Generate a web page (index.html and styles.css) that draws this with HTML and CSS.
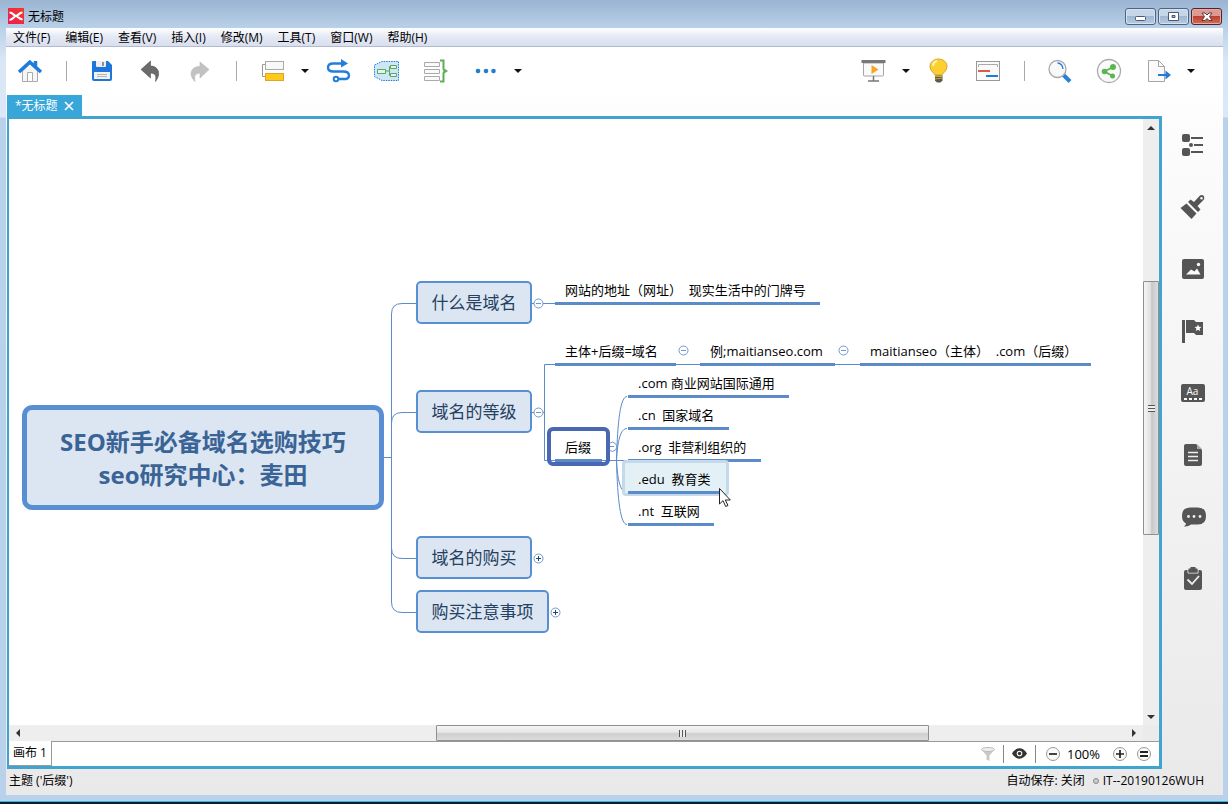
FILE: index.html
```html
<!DOCTYPE html>
<html lang="zh-CN">
<head>
<meta charset="utf-8">
<title>无标题</title>
<link rel="stylesheet" href="styles.css">
</head>
<body>
<div class="window">
  <header class="titlebar">
    <svg class="app-logo" width="16" height="16" viewBox="0 0 16 16"><defs><linearGradient id="lg" x1="0" y1="1" x2="1" y2="0"><stop offset="0" stop-color="#ee1c58"/><stop offset="1" stop-color="#f23a26"/></linearGradient></defs><rect width="16" height="16" fill="url(#lg)"/><path d="M1.500 4.500C5 4.500 6 8 8 8s3-3.500 6.500-3.500M1.500 12C5 12 6 8 8 8s3 4 6.500 3" fill="none" stroke="#fff" stroke-width="2.200"/></svg>
    <h1 class="title">无标题</h1>
    <div class="win-buttons">
      <button class="win-btn" aria-label="最小化"><svg width="14" height="12" viewBox="0 0 14 12"><rect x="1.500" y="5.500" width="10" height="4" rx="1" fill="#fff" stroke="#4a5a70"/></svg></button>
      <button class="win-btn" aria-label="最大化"><svg width="14" height="12" viewBox="0 0 14 12"><path d="M1.500 1.500h10v8h-10zM5 4.500v2h3v-2z" fill="#fff" stroke="#4a5a70" fill-rule="evenodd"/></svg></button>
      <button class="win-btn close" aria-label="关闭"><svg width="14" height="12" viewBox="0 0 14 12"><path d="M2 2h3l2 2 2-2h3L9.500 5.500l2.500 4H9l-2-2-2 2H2l2.500-4z" fill="#fff" stroke="#5a3a40"/></svg></button>
    </div>
  </header>

  <div class="client">
    <nav class="menubar">
      <button>文件(F)</button><button>编辑(E)</button><button>查看(V)</button><button>插入(I)</button><button>修改(M)</button><button>工具(T)</button><button>窗口(W)</button><button>帮助(H)</button>
    </nav>

    <div class="toolbar">
      <button class="tool" aria-label="主页"><svg viewBox="0 0 26 26"><path d="M5.500 13v10.500h15V13L13 6z" fill="#f6f6f6" stroke="#aaa"/><path d="M10.500 23.500v-9h5v9z" fill="#fff" stroke="#aaa"/><path d="M2 14 12.800 4 24 14M18.500 3v6" fill="none" stroke="#1d7ce0" stroke-width="3.500"/></svg></button>
      <span class="sep"></span>
      <button class="tool" aria-label="保存"><svg viewBox="0 0 26 26"><path d="M4 3h15l4 4v14q0 2-2 2H5q-2 0-2-2V4q0-1 1-1z" fill="#1d76dc"/><path d="M7 3h10v5q0 1-1 1H8q-1 0-1-1z" fill="#eee"/><path d="M13 4h2v4h-2z" fill="#8b9198"/><path d="M5 14h16v7H5z" fill="#f2f2f2"/><path d="M8 16.500h10M8 18.500h10" stroke="#b5b5b5"/></svg></button>
      <button class="tool" aria-label="撤销"><svg viewBox="0 0 26 26"><path d="M3 11.500 12.500 3v5c8 0 11 8 5 15.500 1-6 0-8-5-8.500v5z" fill="#6b6b6b" stroke="#555" stroke-width=".6"/></svg></button>
      <button class="tool" aria-label="重做"><svg viewBox="0 0 26 26"><path d="M22 11.500 13 4v4.500c-9 0-12 8-5 15-1-6 0-8 5-8.500v5z" fill="#c2c2c2" stroke="#b5b5b5" stroke-width=".6"/></svg></button>
      <span class="sep"></span>
      <button class="tool" aria-label="主题"><svg viewBox="0 0 26 26"><path d="M7 6.500H3.500v12H7" fill="none" stroke="#999"/><rect x="6.500" y="3.500" width="18" height="8" fill="#f8f8f8" stroke="#aaa"/><rect x="6.500" y="15.500" width="18" height="7" fill="#fdc91a" stroke="#d9a625"/></svg></button>
      <button class="caret" aria-label="更多主题"></button>
      <button class="tool" aria-label="联系"><svg viewBox="0 0 26 26"><path d="M18 5.500H8q-5 0-5 4t5 4h10q6 0 6 4t-6 3.500h-4" fill="none" stroke="#237edb" stroke-width="2.400"/><path d="M16 1l7 4.500-7 4z" fill="#237edb"/><circle cx="11" cy="21" r="2.300" fill="#fff" stroke="#237edb" stroke-width="2"/></svg></button>
      <button class="tool" aria-label="外框"><svg viewBox="0 0 26 26"><path d="M.5 7 8 3.500h16.500v19H8L.5 18.500z" fill="#cfe6f8" stroke="#1d7ce0" stroke-dasharray="1.500 1"/><path d="M11 13h4M19 8.500h-3.500v9H19" fill="none" stroke="#5aa85a"/><path d="M3.500 11.500h8v4h-8zM16.500 7.500h6v3h-6zM16.500 15.500h6v3h-6z" fill="#e8f5ee" stroke="#5aa85a"/></svg></button>
      <button class="tool" aria-label="概要"><svg viewBox="0 0 26 26"><path d="M1.500 4.500h15v4h-15zM1.500 11.500h15v4h-15zM1.500 18.500h15v4h-15z" fill="#fafafa" stroke="#aaa"/><path d="M17 2.500h3.500v8q0 2 2.500 2.500-2.500.5-2.500 2.500v8H17" fill="none" stroke="#5eae55" stroke-width="2"/><path d="M22 11v4l3-2z" fill="#5eae55"/></svg></button>
      <button class="tool" aria-label="更多"><svg viewBox="0 0 26 26"><g fill="#237bd3"><circle cx="6" cy="13" r="2.300"/><circle cx="14" cy="13" r="2.300"/><circle cx="21.500" cy="13" r="2.300"/></g></svg></button>
      <button class="caret" aria-label="更多工具"></button>
      <span class="spacer"></span>
      <button class="tool" aria-label="演示"><svg viewBox="0 0 26 26"><path d="M3.500 5v12q0 1 1 1h18q1 0 1-1V5z" fill="#fafafa" stroke="#a5a5a5"/><path d="M1.500 2h24v3h-24z" fill="#777"/><path d="M13.500 18v4.500M8 23h11" stroke="#777" stroke-width="1.500"/><path d="M11.500 7v9l7-4.500z" fill="#f5a623"/></svg></button>
      <button class="caret" aria-label="演示选项"></button>
      <button class="tool" aria-label="头脑风暴"><svg viewBox="0 0 26 26"><path d="M9 17C8 14.500 4 13 4 8.500 4 4 8 1 12.500 1S21 4 21 8.500c0 4.500-4 6-5 8.500z" fill="#fed02f" stroke="#d8a425"/><path d="M7 8q0-4 4-5" fill="none" stroke="#fff3b8" stroke-width="2"/><path d="M9 17.500h7.500v5l-2 2h-3.500l-2-2z" fill="#5b5b4b"/><path d="M9 18.500h7.500M9 21l7.500-1" stroke="#c9a83a"/></svg></button>
      <button class="tool" aria-label="甘特图"><svg viewBox="0 0 26 26"><rect x="1.500" y="3.500" width="23" height="19" fill="#fafafa" stroke="#999"/><path d="M3.500 9V6.500h19V9" fill="none" stroke="#aaa"/><path d="M3 13h12" stroke="#dc5b50" stroke-width="2"/><path d="M11 18h12" stroke="#237bd3" stroke-width="2"/></svg></button>
      <span class="sep"></span>
      <button class="tool" aria-label="搜索"><svg viewBox="0 0 26 26"><path d="m16.500 17 6.500 6.500" stroke="#2a7fdc" stroke-width="4"/><circle cx="10.500" cy="11" r="8.500" fill="#f8f9fb" stroke="#aaa" stroke-width="1.300"/><path d="M10.500 5q5 .5 5.500 6" fill="none" stroke="#2a7fdc" stroke-width="1.400"/></svg></button>
      <button class="tool" aria-label="分享"><svg viewBox="0 0 26 26"><circle cx="13" cy="13" r="11.500" fill="#fafafa" stroke="#aaa" stroke-width="1.300"/><path d="m17 9-8.500 4.500 8 4.500" fill="none" stroke="#5cb552" stroke-width="1.800"/><g fill="#5cb552"><circle cx="17" cy="9" r="3"/><circle cx="8.500" cy="13.500" r="2.800"/><circle cx="16.500" cy="18" r="2.500"/></g></svg></button>
      <button class="tool" aria-label="导出"><svg viewBox="0 0 26 26"><path d="M3.500 2.500h10l6 6v15h-16z" fill="#fafafa" stroke="#a5a5a5"/><path d="M13.500 2.500v6h6" fill="none" stroke="#a5a5a5"/><path d="M13 17h9" stroke="#237bd3" stroke-width="2"/><path d="m20.500 12.500 5.500 4.500-5.500 4.500z" fill="#237bd3"/></svg></button>
      <button class="caret" aria-label="导出选项"></button>
    </div>

    <div class="tabs">
      <button class="tab">*无标题 <svg width="10" height="10" viewBox="0 0 10 10"><path d="m1 1 8 8M9 1 1 9" stroke="#fff" stroke-width="1.600"/></svg></button>
    </div>

    <div class="workspace">
      <main class="editor">
        <div class="view">
          <div class="canvas">
            <svg class="links" width="1134" height="606" viewBox="9 119 1134 606" fill="none" stroke="#5b8bc9">
              <path d="M384 457.500h7.500M416 303.500h-14q-10.500 0-10.500 10.500v288q0 10.500 10.500 10.500h14M416 412.500h-14q-10.500 0-10.500 10.500M416 558.500h-14q-10.500 0-10.500-10.500"/>
              <path d="M532 303.500h23M532 412.500h12.500M555 364.500h-10.500v96H555M675 364.500h25M834 364.500h26"/>
              <path d="M602 460.500h25M616.500 460.500c1-40 4-64 10.500-64M616.500 460.500c1-20 4-32 10.500-32M616.500 460.500c1 20 4 32 10.500 32M616.500 460.500c1 40 4 64 10.500 64"/>
            </svg>
            <div class="central">SEO新手必备域名选购技巧<br>seo研究中心<span class="mid-colon">：</span>麦田</div>
            <div class="topic t1">什么是域名</div>
            <div class="topic t2">域名的等级</div>
            <div class="topic t3">域名的购买</div>
            <div class="topic t4">购买注意事项</div>
            <div class="leaf l1">网站的地址（网址）  现实生活中的门牌号</div>
            <div class="leaf l2">主体+后缀=域名</div>
            <div class="leaf l3">例;maitianseo.com</div>
            <div class="leaf l4">maitianseo（主体）  .com（后缀）</div>
            <div class="leaf l5">后缀</div>
            <div class="leaf l6">.com 商业网站国际通用</div>
            <div class="leaf l7">.cn  国家域名</div>
            <div class="leaf l8">.org  非营利组织的</div>
            <div class="hover-frame"></div>
            <div class="leaf l9">.edu  教育类</div>
            <div class="leaf l10">.nt  互联网</div>
            <div class="selection"></div>
            <svg class="links" width="1134" height="606" viewBox="9 119 1134 606" fill="#fff" stroke="#6f97cf">
              <circle cx="538.500" cy="303.500" r="4.500"/><path d="M536 303.500h5"/>
              <circle cx="538.500" cy="412.500" r="4.500"/><path d="M536 412.500h5"/>
              <circle cx="683.500" cy="350.500" r="4.500"/><path d="M681 350.500h5"/>
              <circle cx="843.500" cy="350.500" r="4.500"/><path d="M841 350.500h5"/>
              <path d="M609.500 443.300a4.500 4.500 0 1 1 0 7" fill="none"/><path d="M610 446.500h4"/>
              <circle cx="538.500" cy="558.500" r="4.500"/><path d="M536 558.500h5M538.500 556v5" stroke="#24466f"/>
              <circle cx="555.500" cy="612.500" r="4.500"/><path d="M553 612.500h5M555.500 610v5" stroke="#24466f"/>
              <path d="M719.500 488.500v15.500l3.500-3.300 2.700 5.800 2.300-1-2.700-5.500h5z" stroke="#222"/>
            </svg>
          </div>
          <div class="scroll vertical">
            <span class="arrow up"></span><span class="v-before"></span><span class="v-thumb"></span><span class="v-after"></span><span class="arrow down"></span>
          </div>
          <div class="scroll horizontal">
            <span class="arrow left"></span><span class="h-before"></span><span class="h-thumb"></span><span class="h-after"></span><span class="arrow right"></span>
          </div>
          <div class="corner"></div>
        </div>
        <footer class="sheetbar">
          <button class="sheet">画布 1</button>
          <div class="sheet-tools">
            <button class="mini filter" aria-label="筛选"><svg viewBox="0 0 16 16"><path d="M1.500 3.500h13l-5 6V15l-3-1.500v-4z" fill="#c8c8c8"/><ellipse cx="8" cy="3.500" rx="6.500" ry="2" fill="#eee" stroke="#bbb"/></svg></button>
            <button class="mini eye" aria-label="显示"><svg viewBox="0 0 16 16"><path d="M0 8q3.500-5.500 8-5.500T16 8q-3.500 5.500-8 5.500T0 8z" fill="#333"/><circle cx="8" cy="8" r="3" fill="#fff"/><circle cx="8" cy="8" r="1.800" fill="#333"/></svg></button>
            <button class="mini" aria-label="缩小"><svg viewBox="0 0 16 16"><circle cx="8" cy="8" r="6.500" fill="#fafafa" stroke="#999"/><path d="M4 8h8" stroke="#222" stroke-width="1.700"/></svg></button>
            <button class="zoom">100%</button>
            <button class="mini" aria-label="放大"><svg viewBox="0 0 16 16"><circle cx="8" cy="8" r="6.500" fill="#fafafa" stroke="#999"/><path d="M4 8h8M8 4v8" stroke="#222" stroke-width="1.700"/></svg></button>
            <button class="mini fit" aria-label="适合大小"><svg viewBox="0 0 16 16"><circle cx="8" cy="8" r="6.500" fill="#fafafa" stroke="#999"/><path d="M4 6h8M4 10h8" stroke="#222" stroke-width="2"/></svg></button>
          </div>
        </footer>
      </main>

      <aside class="side">
        <button class="tool" aria-label="大纲"><svg viewBox="0 0 26 26" fill="#555"><rect x="2" y="2" width="8" height="8" rx="2"/><rect x="2" y="16" width="8" height="8" rx="2"/><circle cx="11" cy="13" r="2"/><path d="M11 5h12v2H11zM14 12h9v2h-9zM11 19h12v2H11z"/></svg></button>
        <button class="tool" aria-label="格式"><svg viewBox="0 0 26 26" fill="#555"><path d="m8 8 2.500-2.500L14 8l5.500-6Q22 0 24 2.300q1 2.400-1 4.200L17.500 12l3 3.500L18 18z"/><path d="m6.500 9.500 10 10L11.500 25 .5 14z"/><circle cx="21.500" cy="4.300" r="1.200" fill="#fff"/></svg></button>
        <button class="tool" aria-label="图片"><svg viewBox="0 0 26 26"><rect x="2" y="3" width="22" height="20" rx="2" fill="#555"/><path d="m6 18.500 5-5 3.500 2 2.500-3 3.500 6z" fill="#fafafa"/><circle cx="18.500" cy="8.500" r="1.700" fill="#fafafa"/></svg></button>
        <button class="tool" aria-label="图标"><svg viewBox="0 0 26 26"><path d="M2 2h3v23H2zM6 2h8l2 2h7v13h-7l-2-2H6z" fill="#555"/><path d="m18 6.500 1 2.300 2.500.2-1.900 1.600.6 2.400-2.200-1.300-2.200 1.300.6-2.400L14.500 9l2.500-.2z" fill="#fff"/></svg></button>
        <button class="tool label-tool" aria-label="标签">Aa</button>
        <button class="tool" aria-label="备注"><svg viewBox="0 0 26 26"><path d="M6 2h10l6 6v14q0 2-2 2H6q-2 0-2-2V4q0-2 2-2z" fill="#555"/><path d="M17 2v5h5z" fill="#aaa"/><path d="M8 10.500h10M8 14.500h10M8 18.500h10" stroke="#eee" stroke-width="1.300"/></svg></button>
        <button class="tool" aria-label="批注"><svg viewBox="0 0 26 26"><path d="M10 3.500h8q8 0 8 8.500t-8 8.500h-7q-3 2.500-7 2 2-1.500 2-3-4-2-4-7.500 0-8.500 8-8.500z" fill="#555"/><g fill="#eee"><circle cx="8.500" cy="12.500" r="1.400"/><circle cx="14" cy="12.500" r="1.400"/><circle cx="20" cy="12.500" r="1.400"/></g></svg></button>
        <button class="tool" aria-label="任务"><svg viewBox="0 0 26 26"><rect x="4" y="4" width="18" height="20" rx="2" fill="#555"/><path d="M8 3v4h10V3" fill="none" stroke="#eee"/><path d="M8.500 6.500v-4h2V1h5v1.500h2v4z" fill="#555"/><path d="m7.500 13.500 4.500 4.500 7-8" fill="none" stroke="#f0f0f0" stroke-width="1.800"/></svg></button>
      </aside>
    </div>

    <div class="statusbar">
      <span>主题 ('后缀')</span>
      <span class="autosave">自动保存: 关闭</span>
      <span class="dot"></span>
      <span>IT--20190126WUH</span>
    </div>
  </div>
</div>
</body>
</html>
```

FILE: styles.css
```css
* { box-sizing: border-box; }

body {
  margin: 0;
  font: 12px/18px "Open Sans", "Noto Sans CJK SC", sans-serif;
  color: #000;
}

button {
  margin: 0;
  padding: 0;
  border: 0;
  background: none;
  font: inherit;
  color: inherit;
}

svg { display: block; }

.window {
  display: flex;
  flex-direction: column;
  height: 100vh;
  padding: 0 5px 7px 6px;
  background: linear-gradient(#9ab4d2 0, #b9d1e8 28px, #d9e6f5 60px, #dbe8f7 117px, #b9d1ea 118px);
  border-bottom: 2px solid #0a1d33;
  box-shadow: inset 0 -1px #35b8dc;
}

.titlebar {
  display: flex;
  height: 28px;
  padding: 8px 1px 0 2px;
  gap: 4px;
}

.title {
  flex: 1;
  margin: 0;
  font-size: 12px;
  font-weight: normal;
  line-height: 18px;
}

.win-buttons { display: flex; gap: 2px; }

.win-btn {
  display: grid;
  place-items: center;
  width: 31px;
  height: 17px;
  border: 1px solid #50647f;
  border-radius: 3px;
  background: linear-gradient(#c5d6e8 45%, #9fb7d0 50%, #b5cce3);
  box-shadow: inset 0 0 0 1px #d5e3f1;
}

.win-btn.close {
  border-color: #54222c;
  background: linear-gradient(#dc9a90 45%, #bd4030 50%, #d0705a);
  box-shadow: inset 0 0 0 1px #e5aca5;
}

.client {
  flex: 1;
  display: flex;
  flex-direction: column;
  min-height: 0;
  background: linear-gradient(#fff 60px, #fcfcfc 100px, #e9e9e9);
}

.menubar {
  display: flex;
  gap: 15px;
  height: 19px;
  padding: 1px 0 0 7px;
  background: linear-gradient(#fff, #e6eaf5 45%, #d9dfef);
  border-bottom: 1px solid #b3bacd;
}

.toolbar {
  display: flex;
  align-items: center;
  gap: 23px;
  height: 48px;
  padding: 0 35px 0 11px;
}

.tool { flex: none; width: 26px; height: 26px; }
.sep { width: 1px; height: 20px; margin-right: -1px; background: #aaa; }
.spacer { flex: 1; }

.caret {
  display: grid;
  place-items: center;
  width: 10px;
  height: 20px;
  margin: 0 -8px;
}
.caret::before {
  content: "";
  border: 4px solid transparent;
  border-top-color: #111;
  border-bottom: 0;
}

.tabs { display: flex; height: 21px; padding-left: 1px; }

.tab {
  display: flex;
  align-items: center;
  gap: 6px;
  padding: 1px 8px 0;
  background: #38a6d8;
  color: #fff;
}

.workspace { flex: 1; display: flex; min-height: 0; padding-left: 1px; }

.editor {
  flex: 1;
  display: flex;
  flex-direction: column;
  min-width: 0;
  border: solid #41a4cf;
  border-width: 3px 3px 3px 2px;
  background: #fff;
}

.view {
  flex: 1;
  display: grid;
  grid-template: minmax(0, 1fr) 16px / minmax(0, 1fr) 16px;
  min-height: 0;
}

.canvas { position: relative; overflow: hidden; }
.links { position: absolute; left: 0; top: 0; }

.central, .topic, .leaf, .hover-frame, .selection {
  position: absolute;
  white-space: pre;
}

.central {
  left: 13px;
  top: 286px;
  width: 362px;
  height: 105px;
  padding-top: 16px;
  border: 5px solid #588fd3;
  border-radius: 10px;
  background: #dce6f2;
  color: #3a6396;
  font-size: 24px;
  font-weight: bold;
  line-height: 32px;
  text-align: center;
}
.mid-colon { font-family: "Noto Sans CJK TC", sans-serif; }

.topic {
  left: 407px;
  width: 116px;
  height: 43px;
  border: 2px solid #588fd3;
  border-radius: 5px;
  background: #dce6f2;
  color: #254061;
  font-size: 17px;
  line-height: 39px;
  text-align: center;
}

.t1 { top: 162px; }
.t2 { top: 271px; }
.t3 { top: 417px; }
.t4 { top: 471px; width: 133px; }

.leaf {
  height: 25px;
  padding-left: 10px;
  border-bottom: 3px solid #5b8bc9;
  font-size: 13px;
  line-height: 20px;
}

.l1 { left: 546px; top: 161px; width: 265px; }
.l2 { left: 546px; top: 222px; width: 121px; }
.l3 { left: 691px; top: 222px; width: 135px; }
.l4 { left: 851px; top: 222px; width: 231px; }
.l5 { left: 546px; top: 318px; width: 47px; }
.l6 { left: 619px; top: 254px; width: 161px; }
.l7 { left: 619px; top: 286px; width: 101px; }
.l8 { left: 619px; top: 318px; width: 133px; }
.l9 { left: 619px; top: 350px; width: 93px; }
.l10 { left: 619px; top: 382px; width: 86px; }

.hover-frame {
  left: 613px;
  top: 341px;
  width: 107px;
  height: 36px;
  border: 3px solid rgba(185, 208, 229, .75);
  border-radius: 4px;
  background: #e3f1f6;
}

.selection {
  left: 538px;
  top: 308px;
  width: 63px;
  height: 39px;
  border: 4px solid #4a68b2;
  border-radius: 6px;
}

.scroll { display: flex; background: #eee; }
.vertical { flex-direction: column; width: 16px; }
.arrow { display: grid; place-items: center; flex: 0 0 17px; }
.arrow::before { content: ""; border: 4px solid transparent; }
.up::before { border-bottom-color: #333; border-top: 0; }
.down::before { border-top-color: #333; border-bottom: 0; }
.left::before { border-right-color: #333; border-left: 0; }
.right::before { border-left-color: #333; border-right: 0; }

.v-before { flex: 146; }
.v-thumb { flex: 252; }
.v-after { flex: 174; }
.h-before { flex: 411; }
.h-thumb { flex: 492; }
.h-after { flex: 198; }

.v-thumb, .h-thumb {
  display: grid;
  place-items: center;
  border: 1px solid #8f8f8f;
  border-radius: 1px;
}
.v-thumb { background: linear-gradient(90deg, #f5f5f5, #e2e2e2 45%, #c8c8cc 55%, #ddd); }
.h-thumb { background: linear-gradient(#f5f5f5, #e6e6e6 45%, #cfcfd3 55%, #ddd); }
.v-thumb::before, .h-thumb::before { content: ""; width: 7px; height: 7px; }
.v-thumb::before { background: repeating-linear-gradient(#555 0 1px, #eee 1px 3px); }
.h-thumb::before { background: repeating-linear-gradient(90deg, #555 0 1px, #eee 1px 3px); }
.corner { background: #ebebeb; }

.sheetbar { display: flex; justify-content: space-between; height: 25px; }

.sheet {
  padding: 0 4px;
  border-right: 1px solid #999;
  border-bottom: 1px solid #999;
}

.sheet-tools {
  flex: 1;
  display: flex;
  align-items: center;
  justify-content: flex-end;
  padding: 0 7px 1px 0;
  border-top: 1px solid #999;
}

.mini { width: 16px; height: 18px; padding: 1px 0; }
.filter { width: 23px; padding-right: 7px; }
.eye {
  width: 33px;
  padding: 1px 8px;
  border: solid #888;
  border-width: 0 1px;
  margin-right: 9px;
}
.zoom { width: 51px; padding-left: 6px; text-align: left; font-size: 13px; }
.fit { margin-left: 8px; }

.side {
  display: flex;
  flex-direction: column;
  align-items: center;
  gap: 36px;
  width: 61px;
  padding-top: 16px;
}

.label-tool {
  height: 18px;
  width: 24px;
  margin: 4px 0;
  border-radius: 2px;
  background: #555;
  color: #fff;
  font-size: 10px;
  line-height: 11px;
}
.label-tool::after {
  content: "";
  display: block;
  height: 2px;
  margin: 1px 3px 0;
  background: repeating-linear-gradient(90deg, #fff 0 3px, #555 3px 5px);
}

.statusbar {
  display: flex;
  align-items: center;
  height: 26px;
  padding: 0 19px 2px 3px;
}
.autosave { margin-left: auto; }
.dot {
  width: 6px;
  height: 6px;
  margin: 0 4px 0 8px;
  border: 1px solid #888;
  border-radius: 50%;
  background: #ccc;
}
```
